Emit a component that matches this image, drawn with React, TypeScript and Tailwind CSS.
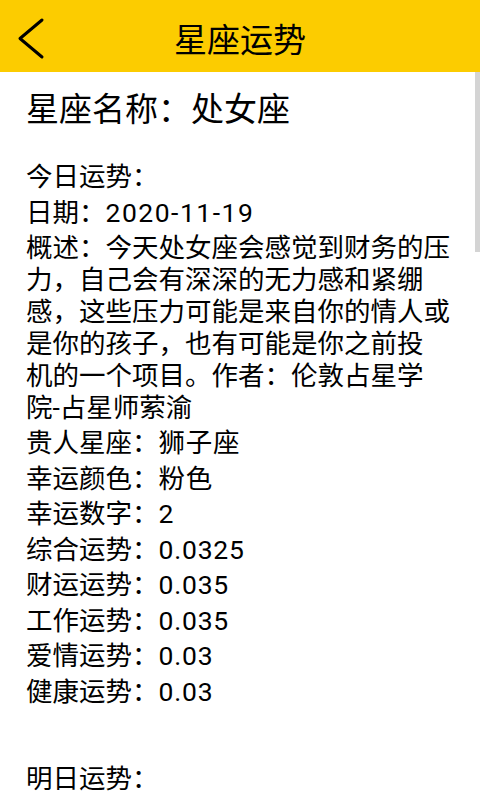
import React from 'react'

const overviewLines = [
  '概述：今天处女座会感觉到财务的压',
  '力，自己会有深深的无力感和紧绷',
  '感，这些压力可能是来自你的情人或',
  '是你的孩子，也有可能是你之前投',
  '机的一个项目。作者：伦敦占星学',
  '院-占星师萦渝',
]

const rows = [
  ['贵人星座', '狮子座'],
  ['幸运颜色', '粉色'],
  ['幸运数字', '2'],
  ['综合运势', '0.0325'],
  ['财运运势', '0.035'],
  ['工作运势', '0.035'],
  ['爱情运势', '0.03'],
  ['健康运势', '0.03'],
]

function BackIcon() {
  return (
    <svg width="30" height="44" viewBox="0 0 30 44" fill="none">
      <polyline points="25,3 3,21.5 25,40" stroke="#000" strokeWidth="3" strokeLinecap="round" strokeLinejoin="round" />
    </svg>
  )
}

export default function App() {
  return (
    <div
      className="relative h-[800px] w-[480px] overflow-hidden bg-white text-black"
      style={{ fontFamily: 'Roboto, "Noto Sans CJK SC", sans-serif' }}
    >
      <header className="relative flex h-[72px] items-center justify-center bg-[#fccc00] pt-[9px]">
        <button className="absolute left-[17px] top-[17px]">
          <BackIcon />
        </button>
        <h1 className="text-[33px] leading-[40px] text-black">星座运势</h1>
      </header>

      {/* scrollbar thumb */}
      <div className="absolute right-0 top-[72px] h-[180px] w-[5px] bg-[#d4d4d4]" />

      <main className="px-[26px] pt-[18px]">
        <h2 className="text-[33px] leading-[40px]">星座名称：处女座</h2>

        <section className="mt-[31px] text-[26.5px] leading-[32px]">
          <p className="mb-[3.5px]">今日运势：</p>
          <p className="mb-[3.5px]">
            日期：<span className="tracking-[1.5px]">2020-11-19</span>
          </p>
          <p className="mb-[3px]">
            {overviewLines.map((line, i) => (
              <span key={i} className="block">{line}</span>
            ))}
          </p>
          {rows.map(([label, value]) => (
            <p key={label} className="mb-[3.5px]">
              {label}：<span className="tracking-[0.8px]">{value}</span>
            </p>
          ))}
          <p className="mt-[55px]">明日运势：</p>
        </section>
      </main>
    </div>
  )
}
